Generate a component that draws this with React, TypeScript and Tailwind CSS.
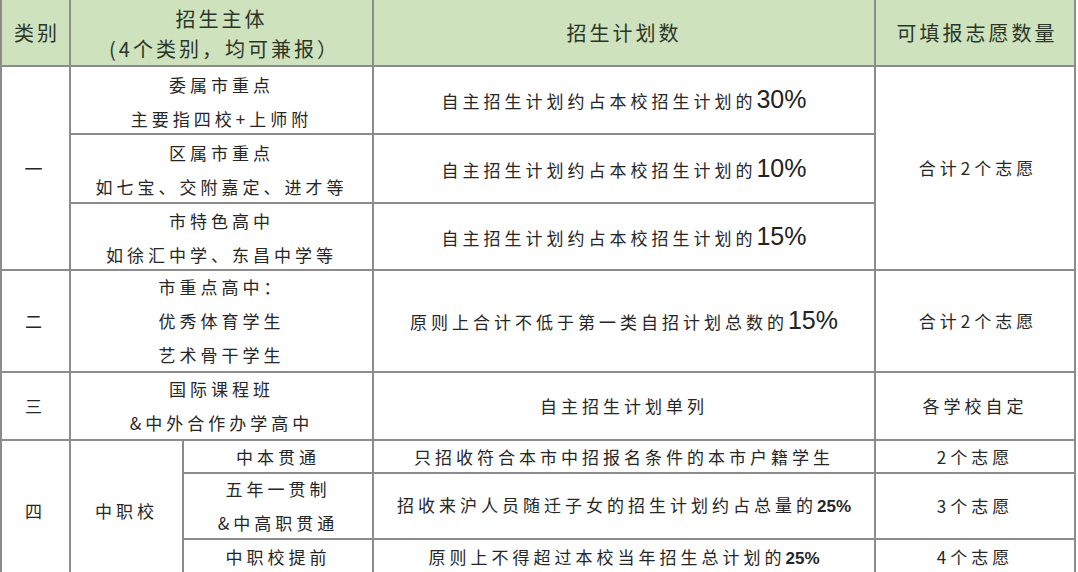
import React from "react";

const cjk = { fontFamily: '"Noto Sans CJK SC", "Noto Sans", sans-serif' };

function Big({ children }: { children: React.ReactNode }) {
  return (
    <span className="text-[25px] tracking-normal text-[#222]" style={{ fontFamily: '"Liberation Sans", Arial, sans-serif' }}>
      {children}
    </span>
  );
}

function Small({ children }: { children: React.ReactNode }) {
  return (
    <span className="text-[17px] font-semibold tracking-normal" style={{ fontFamily: '"Liberation Sans", Arial, sans-serif' }}>
      {children}
    </span>
  );
}

export default function App() {
  const head = "bg-[#cee2be] flex flex-col items-center justify-center text-[20px] leading-[30px] tracking-[3px] text-[#2b3628]";
  const cell = "bg-white flex flex-col items-center justify-center text-[17px] leading-[34px] tracking-[4px] text-[#262626]";
  return (
    <div className="w-[1078px] h-[572px] overflow-hidden bg-white" style={cjk}>
      <div className="w-[1076px] grid grid-cols-[67px_111px_188px_500px_198px] grid-rows-[65px_66px_67px_65px_100px_66px_31px_64px_40px] gap-[2px] bg-[#8c8c8c] px-[2px]">
        {/* header */}
        <div className={`${head} col-start-1 row-start-1 pl-[3px]`}>类别</div>
        <div className={`${head} col-start-2 col-span-2 row-start-1`}>
          <div className="pt-[2px]">招生主体</div>
          <div className="tracking-[3px] pl-[6px]">(4个类别，均可兼报）</div>
        </div>
        <div className={`${head} col-start-4 row-start-1`}>招生计划数</div>
        <div className={`${head} col-start-5 row-start-1 pl-[4px]`}>可填报志愿数量</div>

        {/* 一 */}
        <div className={`${cell} col-start-1 row-start-2 row-span-3 text-[18px]`}>一</div>
        <div className={`${cell} col-start-2 col-span-2 row-start-2 tracking-[3px] pt-[4px]`}>
          <div>委属市重点</div>
          <div>主要指四校+上师附</div>
        </div>
        <div className={`${cell} col-start-4 row-start-2`}>
          <div>自主招生计划约占本校招生计划的<Big>30%</Big></div>
        </div>
        <div className={`${cell} col-start-5 row-start-2 row-span-3 tracking-[3px] pl-[6px]`}>合计2个志愿</div>

        <div className={`${cell} col-start-2 col-span-2 row-start-3 tracking-[3px] pt-[2px]`}>
          <div>区属市重点</div>
          <div>如七宝、交附嘉定、进才等</div>
        </div>
        <div className={`${cell} col-start-4 row-start-3`}>
          <div>自主招生计划约占本校招生计划的<Big>10%</Big></div>
        </div>

        <div className={`${cell} col-start-2 col-span-2 row-start-4 tracking-[3px] pt-[2px]`}>
          <div>市特色高中</div>
          <div>如徐汇中学、东昌中学等</div>
        </div>
        <div className={`${cell} col-start-4 row-start-4`}>
          <div>自主招生计划约占本校招生计划的<Big>15%</Big></div>
        </div>

        {/* 二 */}
        <div className={`${cell} col-start-1 row-start-5`}>二</div>
        <div className={`${cell} col-start-2 col-span-2 row-start-5 tracking-[3px]`}>
          <div>市重点高中：</div>
          <div>优秀体育学生</div>
          <div>艺术骨干学生</div>
        </div>
        <div className={`${cell} col-start-4 row-start-5`}>
          <div>原则上合计不低于第一类自招计划总数的<Big>15%</Big></div>
        </div>
        <div className={`${cell} col-start-5 row-start-5 tracking-[3px] pl-[6px]`}>合计2个志愿</div>

        {/* 三 */}
        <div className={`${cell} col-start-1 row-start-6`}>三</div>
        <div className={`${cell} col-start-2 col-span-2 row-start-6 tracking-[3px]`}>
          <div>国际课程班</div>
          <div>&amp;中外合作办学高中</div>
        </div>
        <div className={`${cell} col-start-4 row-start-6`}>自主招生计划单列</div>
        <div className={`${cell} col-start-5 row-start-6 tracking-[3px]`}>各学校自定</div>

        {/* 四 */}
        <div className={`${cell} col-start-1 row-start-7 row-span-3`}>四</div>
        <div className={`${cell} col-start-2 row-start-7 row-span-3`}>中职校</div>
        <div className={`${cell} col-start-3 row-start-7 tracking-[3px]`}>中本贯通</div>
        <div className={`${cell} col-start-4 row-start-7`}>只招收符合本市中招报名条件的本市户籍学生</div>
        <div className={`${cell} col-start-5 row-start-7 tracking-[3px]`}>2个志愿</div>

        <div className={`${cell} col-start-3 row-start-8 tracking-[3px] leading-[32px]`}>
          <div>五年一贯制</div>
          <div>&amp;中高职贯通</div>
        </div>
        <div className={`${cell} col-start-4 row-start-8`}>
          <div>招收来沪人员随迁子女的招生计划约占总量的<Small>25%</Small></div>
        </div>
        <div className={`${cell} col-start-5 row-start-8 tracking-[3px]`}>3个志愿</div>

        <div className={`${cell} col-start-3 row-start-9 tracking-[3px] justify-start`}>中职校提前</div>
        <div className={`${cell} col-start-4 row-start-9 justify-start`}>
          <div>原则上不得超过本校当年招生总计划的<Small>25%</Small></div>
        </div>
        <div className={`${cell} col-start-5 row-start-9 tracking-[3px] justify-start`}>4个志愿</div>
      </div>
    </div>
  );
}
